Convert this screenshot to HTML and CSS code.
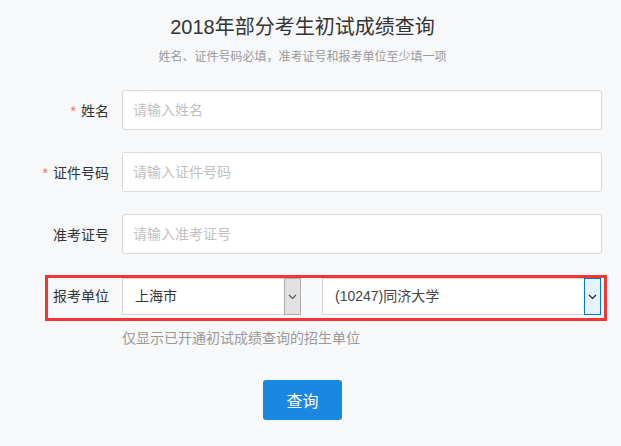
FILE: index.html
```html
<!DOCTYPE html>
<html lang="zh-CN">
<head>
<meta charset="utf-8">
<title>2018年部分考生初试成绩查询</title>
<link rel="stylesheet" href="styles.css">
</head>
<body>
<div class="page">
  <h1 class="title">2018年部分考生初试成绩查询</h1>
  <p class="subtitle">姓名、证件号码必填，准考证号和报考单位至少填一项</p>
  <form class="form">
    <div class="row">
      <label class="label"><span class="req">*</span>姓名</label>
      <input class="input" type="text" placeholder="请输入姓名">
    </div>
    <div class="row">
      <label class="label"><span class="req">*</span>证件号码</label>
      <input class="input" type="text" placeholder="请输入证件号码">
    </div>
    <div class="row">
      <label class="label">准考证号</label>
      <input class="input" type="text" placeholder="请输入准考证号">
    </div>
    <div class="row row-unit">
      <label class="label label-unit">报考单位</label>
      <div class="select select-prov">
        <span class="select-text">上海市</span>
        <span class="select-btn">
          <svg width="9" height="6" viewBox="0 0 9 6"><path d="M1 1 L4.5 4.5 L8 1" fill="none" stroke="#555" stroke-width="1.1"/></svg>
        </span>
      </div>
      <div class="select select-school">
        <span class="select-text">(10247)同济大学</span>
        <span class="select-btn select-btn-active">
          <svg width="9" height="6" viewBox="0 0 9 6"><path d="M1 1 L4.5 4.5 L8 1" fill="none" stroke="#222" stroke-width="1.2"/></svg>
        </span>
      </div>
    </div>
    <p class="hint">仅显示已开通初试成绩查询的招生单位</p>
    <div class="actions">
      <button class="btn" type="button">查询</button>
    </div>
  </form>
</div>
</body>
</html>
```

FILE: styles.css
```css
html, body {
  margin: 0;
  padding: 0;
  background: #f7f8fa;
}

body {
  font-family: "Liberation Sans", "Noto Sans CJK SC", sans-serif;
  color: #333;
}

.page {
  width: 605px;
  padding-top: 13px;
}

.title {
  margin: 0;
  font-size: 20px;
  font-weight: normal;
  line-height: 28px;
  text-align: center;
  color: #333;
}

.subtitle {
  margin: 7px 0 0;
  font-size: 12px;
  line-height: 18px;
  text-align: center;
  color: #999;
}

.form {
  margin-top: 24px;
}

.row {
  display: flex;
  align-items: center;
  height: 40px;
  margin-bottom: 22px;
}

.label {
  width: 109px;
  margin-right: 13px;
  text-align: right;
  font-size: 14px;
  color: #333;
  flex-shrink: 0;
}

.req {
  color: #f56c6c;
  margin-right: 5px;
}

.input {
  box-sizing: border-box;
  width: 480px;
  height: 40px;
  margin: 0;
  padding: 0 10px;
  border: 1px solid #d9d9d9;
  border-radius: 3px;
  background: #fff;
  font-family: "Liberation Sans", "Noto Sans CJK SC", sans-serif;
  font-size: 14px;
  color: #333;
  outline: none;
}

.input::placeholder {
  color: #c0c0c0;
}

.row-unit {
  margin-top: 24px;
  margin-left: 48px;
  width: 556px;
  margin-bottom: 0;
  align-items: flex-start;
  outline: 3px solid #f53435;
}

.label-unit {
  width: 61px;
  margin-right: 13px;
  line-height: 37px;
}

.select {
  box-sizing: border-box;
  display: flex;
  align-items: stretch;
  height: 37px;
  background: #fff;
  border: 1px solid #d6d6d6;
  font-size: 14px;
  color: #333;
}

.select-prov {
  width: 179px;
  margin-right: 21px;
}

.select-school {
  width: 279px;
}

.select-text {
  flex: 1;
  padding-left: 12px;
  line-height: 35px;
}

.select-school .select-text {
  color: #444;
}

.select-btn {
  box-sizing: border-box;
  width: 17px;
  display: flex;
  align-items: center;
  justify-content: center;
  background: #e1e1e1;
  border: 1px solid #adadad;
  margin: -1px -1px -1px 0;
}

.select-btn-active {
  background: #e5f1fb;
  border-color: #0078d7;
}

.hint {
  margin: 10px 0 0 122px;
  font-size: 14px;
  line-height: 20px;
  color: #999;
}

.actions {
  display: flex;
  justify-content: center;
  margin-top: 32px;
}

.btn {
  width: 79px;
  height: 40px;
  border: none;
  border-radius: 3px;
  background: #1a87e0;
  color: #fff;
  font-family: "Liberation Sans", "Noto Sans CJK SC", sans-serif;
  font-size: 16px;
  padding: 0;
  cursor: pointer;
}
```
